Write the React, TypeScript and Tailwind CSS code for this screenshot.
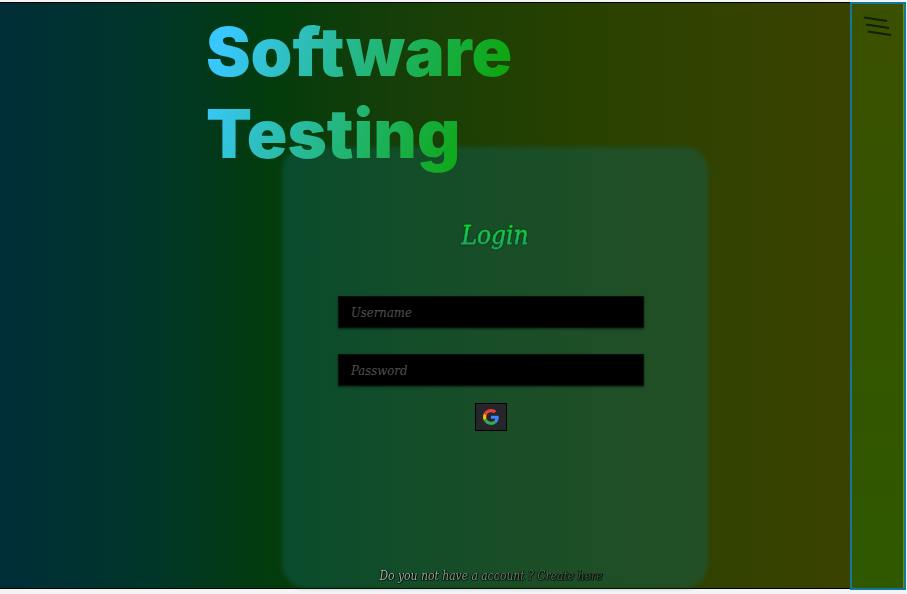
const serif = "font-['DejaVu_Serif_Condensed','DejaVu_Serif',serif] italic";

function Field({ label, type }: { label: string; type: string }) {
  return (
    <input
      aria-label={label}
      type={type}
      placeholder={label}
      className="block h-8 w-full border border-[#03130a] bg-black px-3 text-[13px] leading-6 text-gray-300 shadow-[0_1px_2px_#0008] outline-none placeholder:text-[#505050]"
    />
  );
}

function GoogleLogo() {
  return (
    <svg viewBox="0 0 48 48" className="size-4">
      <path fill="#ea4335" d="M24 9.5c3.54 0 6.71 1.22 9.21 3.6l6.85-6.85C35.9 2.38 30.47 0 24 0 14.62 0 6.51 5.38 2.56 13.22l7.98 6.19C12.43 13.72 17.74 9.5 24 9.5z" />
      <path fill="#4285f4" d="M46.98 24.55c0-1.57-.15-3.09-.38-4.55H24v9.02h12.94c-.58 2.96-2.26 5.48-4.78 7.18l7.73 6c4.51-4.18 7.09-10.36 7.09-17.65z" />
      <path fill="#fbbc05" d="M10.53 28.59c-.48-1.45-.76-2.99-.76-4.59s.27-3.14.76-4.59l-7.98-6.19C.92 16.46 0 20.12 0 24c0 3.88.92 7.54 2.56 10.78l7.97-6.19z" />
      <path fill="#34a853" d="M24 48c6.48 0 11.93-2.13 15.89-5.81l-7.73-6c-2.15 1.45-4.92 2.3-8.16 2.3-6.26 0-11.57-4.22-13.47-9.91l-7.98 6.19C6.51 42.62 14.62 48 24 48z" />
    </svg>
  );
}

function LoginCard() {
  return (
    <section className={`relative mx-auto -mt-7 flex w-3/5 flex-1 flex-col items-center px-14 ${serif}`}>
      <div className="absolute inset-0 rounded-3xl bg-[#106258]/43 blur-[2px]" />
      <form className="relative flex w-full flex-1 flex-col items-center pt-[72px] pr-2 pb-1">
        <h2 className="ml-2 bg-gradient-to-b from-[#08e020] from-20% to-[#20a070] to-85% bg-clip-text px-1 text-[26px] leading-8 text-transparent drop-shadow-[0_0_1px_#003010] [-webkit-text-stroke:0.3px_#12b83c]">
          Login
        </h2>
        <div className="mt-[45px] flex w-full flex-col gap-[26px]">
          <Field label="Username" type="text" />
          <Field label="Password" type="password" />
        </div>
        <button
          type="button"
          aria-label="Sign in with Google"
          className="mt-[17px] flex h-7 w-8 items-center justify-center border border-black bg-[#25262b]"
        >
          <GoogleLogo />
        </button>
        <p className="mt-auto bg-gradient-to-r from-[#b4c0b4] to-[#3a5238] bg-clip-text text-xs leading-4 whitespace-nowrap text-transparent [filter:drop-shadow(1px_0_0_#000b)_drop-shadow(-1px_0_0_#0008)_drop-shadow(0_1px_0_#0008)]">
          Do you not have a account ? <a href="#create">Create here</a>
        </p>
      </form>
    </section>
  );
}

export default function App() {
  return (
    <div className="flex min-h-screen bg-[#f3f4f4] pt-0.5 pr-px pb-1">
      <main className="mb-px flex flex-1 flex-col border-y border-black bg-[linear-gradient(90deg,#002d38_0%,#003629_18%,#033c0c_32%,#163e08_47%,#284100_68%,#3b4200_100%)] pl-[140px]">
        <h1 className="relative z-10 ml-[66px] w-[320px] self-start bg-[linear-gradient(110deg,#38c8ff_8%,#22b573_50%,#0da60d_85%)] bg-clip-text pt-2 font-['Inter',sans-serif] text-[67px] leading-[82px] font-black text-transparent">
          Software Testing
        </h1>
        <LoginCard />
      </main>
      <aside className="w-14 border-2 border-[#16759a] bg-gradient-to-b from-[#3a5000] to-[#2e5900] px-3 pt-3 shadow-[inset_-1px_0_0_#6c8c00]">
        <button type="button" aria-label="Open menu" className="block">
          <svg viewBox="0 0 28 22" className="h-[22px] w-7" stroke="#101f08" strokeWidth="2" fill="none">
            <path d="M0 1.5L23 5M2 8.5L25 12M4 15.5L27 19" />
          </svg>
        </button>
      </aside>
    </div>
  );
}
